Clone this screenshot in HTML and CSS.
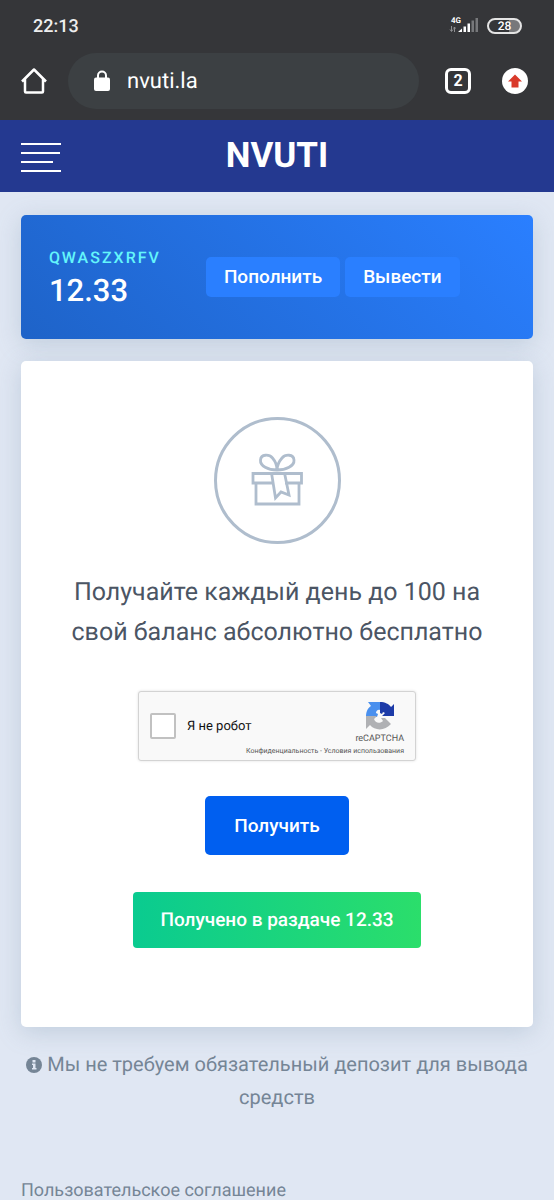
FILE: index.html
```html
<!DOCTYPE html>
<html lang="ru">
<head>
<meta charset="utf-8">
<meta name="viewport" content="width=device-width, initial-scale=1">
<title>NVUTI</title>
<link rel="stylesheet" href="styles.css">
</head>
<body>
<div class="browser">
  <div class="status">
    <span class="clock">22:13</span>
    <svg class="signal" width="30" height="18" viewBox="0 0 30 18" role="img" aria-label="4G">
      <text class="signal-label" x="2" y="6">4G</text>
      <path d="M2.500 9v5M1 12.500l1.500 2 1.500-2M5.500 15v-5M4.500 11.500l1-1.500 1 1.500" fill="none" stroke="#8d8e91"/>
      <path d="M9 15l4-3.500V15zM14.500 9.500h2.500V15h-2.500zM18.500 6.500H21V15h-2.500z" fill="#fff"/>
      <path d="M22.500 3.500h2.500V15h-2.500zM26.500 1h2.500v14h-2.500z" fill="#77787b"/>
    </svg>
    <span class="battery">28</span>
  </div>
  <div class="toolbar">
    <button class="icon-button" aria-label="Домой">
      <svg width="26" height="26" viewBox="0 0 26 26" fill="none" stroke="#fff" stroke-width="2.500" stroke-linejoin="round"><path d="M1 13.500L13 1.500l12 12M4 11v12.500q0 1 1 1h16q1 0 1-1V11"/></svg>
    </button>
    <div class="address">
      <svg width="16" height="22" viewBox="0 0 16 22"><path d="M4 9V5.500a4 4 0 0 1 8 0V9" fill="none" stroke="#fff" stroke-width="2"/><rect y="7.500" width="16" height="13.500" rx="2" fill="#fff"/></svg>
      <span>nvuti.la</span>
    </div>
    <button class="tabs">2</button>
    <button class="icon-button" aria-label="Обновить браузер">
      <svg width="26" height="26" viewBox="0 0 26 26"><circle cx="13" cy="13" r="13" fill="#fff"/><path d="M13 6.500l7 7h-3.500v6h-7v-6H6z" fill="#d93a2b"/></svg>
    </button>
  </div>
</div>

<header class="header">
  <button class="menu" aria-label="Меню">
    <svg width="40" height="32" viewBox="0 0 40 32" stroke="#fff" stroke-width="1.800"><path d="M0 4h40M0 13h39M0 22h32M0 31h40"/></svg>
  </button>
  <a class="brand" href="#">NVUTI</a>
</header>

<main class="page">
  <section class="balance">
    <div class="account">
      <div class="login">QWASZXRFV</div>
      <div class="amount">12.33</div>
    </div>
    <div class="actions">
      <button class="action">Пополнить</button>
      <button class="action">Вывести</button>
    </div>
  </section>

  <section class="bonus">
    <div class="gift">
      <svg width="52" height="56" viewBox="0 0 52 56" fill="none" stroke="#afbdcd" stroke-width="2.800">
        <path d="M26 17C17 17 9 13 9.500 7C10 1 18 1 21.500 5C24.500 8.500 26 12 26 17C26 12 28 8.500 31 5C34.500 1 42.500 1 43 7C43.500 13 35 17 26 17Z"/>
        <path d="M21 30H2V20.500h48.500V30H34M5 30v21h43V30M20.500 20l4 25 5.500-6 8 3-4.500-22"/>
      </svg>
    </div>
    <h1 class="title">Получайте каждый день до 100 на свой баланс абсолютно бесплатно</h1>
    <div class="captcha">
      <label class="robot"><input class="robot-box" type="checkbox"><span>Я не робот</span></label>
      <div class="recaptcha">
        <svg width="30" height="30" viewBox="0 0 30 30">
          <path d="M15 1v8c-2-1-4 1-4 3l2 1-1 3H1C1 10 3 7 6 5L3 1z" fill="#4a90ee"/>
          <path d="M15 1c5 0 9 2 11 5l3-3v12H17l3-3-2-1-1 2-2-1z" fill="#1d3ba8"/>
          <path d="M1 15h11l-3 3c1 4 6 5 9 2l-2-3 4 0 6 6c-6 7-16 7-21 1l-4 4z" fill="#b0b1b4"/>
        </svg>
        <span>reCAPTCHA</span>
      </div>
      <div class="legal"><a href="#">Конфиденциальность</a> - <a href="#">Условия использования</a></div>
    </div>
    <button class="claim">Получить</button>
    <div class="result" role="status">Получено в раздаче 12.33</div>
  </section>

  <p class="note"><svg class="info" width="16" height="16" viewBox="0 0 16 16"><circle cx="8" cy="8" r="8" fill="#758596"/><path d="M6.500 3h3v2.500h-3zM6 6.500h3.500V11h1v1.500H6V11h1V8H6z" fill="#e0e7f3"/></svg> Мы не требуем обязательный депозит для вывода средств</p>
</main>
<footer class="footer"><a href="#">Пользовательское соглашение</a></footer>
</body>
</html>
```
FILE: styles.css
```css
* { box-sizing: border-box; }
body {
  margin: 0;
  background: #e0e7f3;
  font-family: Roboto, "Noto Sans", sans-serif;
  color: #4b5564;
  text-rendering: geometricPrecision;
}
button { border: 0; padding: 0; background: none; font: inherit; color: inherit; cursor: pointer; }
a { color: inherit; text-decoration: none; }
svg { display: block; }

.browser { background: #353639; color: #fff; padding-bottom: 11px; }
.status { display: flex; align-items: center; height: 53px; padding: 0 32px 1px 33px; }
.clock { flex: 1; font-size: 18px; font-weight: 500; color: #eee; }
.signal { margin-right: 8px; }
.signal-label { font-size: 8px; font-weight: 700; fill: #fff; }
.battery {
  width: 35px;
  height: 16px;
  border: 2px solid #e4e4e4;
  border-radius: 8px;
  background: linear-gradient(90deg, #353639 65%, #77787b 65%);
  font-size: 12px;
  font-weight: 500;
  line-height: 12px;
  text-align: center;
}
.toolbar { display: flex; align-items: center; padding: 0 26px 0 21px; }
.address {
  flex: 1;
  display: flex;
  align-items: center;
  gap: 17px;
  height: 56px;
  margin: 0 26px 0 21px;
  padding: 0 26px;
  border-radius: 28px;
  background: #3c4043;
  font-size: 22px;
}
.tabs {
  width: 26px;
  height: 26px;
  margin-right: 31px;
  border: 3px solid #fff;
  border-radius: 6px;
  font-size: 16px;
  font-weight: 700;
  line-height: 20px;
}

.header {
  display: grid;
  grid-template-columns: 40px 1fr 40px;
  align-items: center;
  height: 72px;
  padding: 0 21px;
  background: #243990;
}
.brand { justify-self: center; color: #fff; font-size: 35px; font-weight: 700; line-height: 70px; }

.page { padding: 23px 21px 0; }
.balance {
  display: flex;
  align-items: center;
  gap: 45px;
  min-height: 124px;
  padding: 0 28px;
  border-radius: 5px;
  background: linear-gradient(45deg, #1e63c8, #2a7fff);
  box-shadow: 0 5px 25px rgba(110, 140, 165, 0.28);
}
.account { padding-top: 5px; }
.login { color: #64f5fb; font-size: 16px; font-weight: 500; line-height: 22px; letter-spacing: 2px; }
.amount { color: #fff; font-size: 31px; font-weight: 500; line-height: 44px; }
.actions { display: flex; gap: 5px; }
.action {
  height: 40px;
  padding: 0 18px 2px;
  border-radius: 5px;
  background: #2a7fff;
  color: #fff;
  font-size: 19px;
  font-weight: 500;
}

.bonus {
  display: flex;
  flex-direction: column;
  align-items: center;
  margin-top: 22px;
  padding: 56px 42px 79px;
  border-radius: 5px;
  background: #fff;
  box-shadow: 0 5px 25px rgba(110, 140, 165, 0.28);
}
.gift {
  display: grid;
  place-items: center;
  width: 127px;
  height: 127px;
  border: 3px solid #afbdcd;
  border-radius: 50%;
}
.title { margin: 29px 0 38px; font-size: 25px; font-weight: 400; line-height: 40px; text-align: center; }
.captcha {
  display: grid;
  grid-template-columns: 1fr auto;
  width: 278px;
  height: 70px;
  padding: 8px 11px 5px 11px;
  border: 1px solid #d3d3d3;
  border-radius: 3px;
  background: #f9f9f9;
  box-shadow: 0 0 3px rgba(0, 0, 0, 0.12);
}
.robot { display: flex; align-items: center; gap: 11px; color: #111; font-size: 13px; padding-top: 5px; }
.robot-box {
  appearance: none;
  width: 26px;
  height: 26px;
  margin: 0;
  border: 2px solid #c1c1c1;
  border-radius: 2px;
  background: #fff;
}
.recaptcha { display: grid; justify-items: center; padding-top: 1px; color: #555; font-size: 9px; line-height: 16px; }
.legal { grid-column: 1 / -1; color: #555; font-size: 7px; line-height: 8px; text-align: right; }
.claim {
  height: 59px;
  margin-top: 35px;
  padding: 0 29px;
  border-radius: 5px;
  background: #005ff0;
  color: #fff;
  font-size: 19px;
  font-weight: 500;
}
.result {
  margin-top: 37px;
  padding: 0 27px;
  border-radius: 4px;
  background: linear-gradient(90deg, #0acb90, #2bde6b);
  color: #fff;
  font-size: 19px;
  font-weight: 500;
  line-height: 56px;
}
.note { margin: 21px 0 0; color: #758596; font-size: 20px; line-height: 33px; text-align: center; }
.info { display: inline-block; vertical-align: -2px; }
.footer { margin-top: 66px; padding: 0 21px; color: #758596; font-size: 18px; line-height: 22px; }
```
